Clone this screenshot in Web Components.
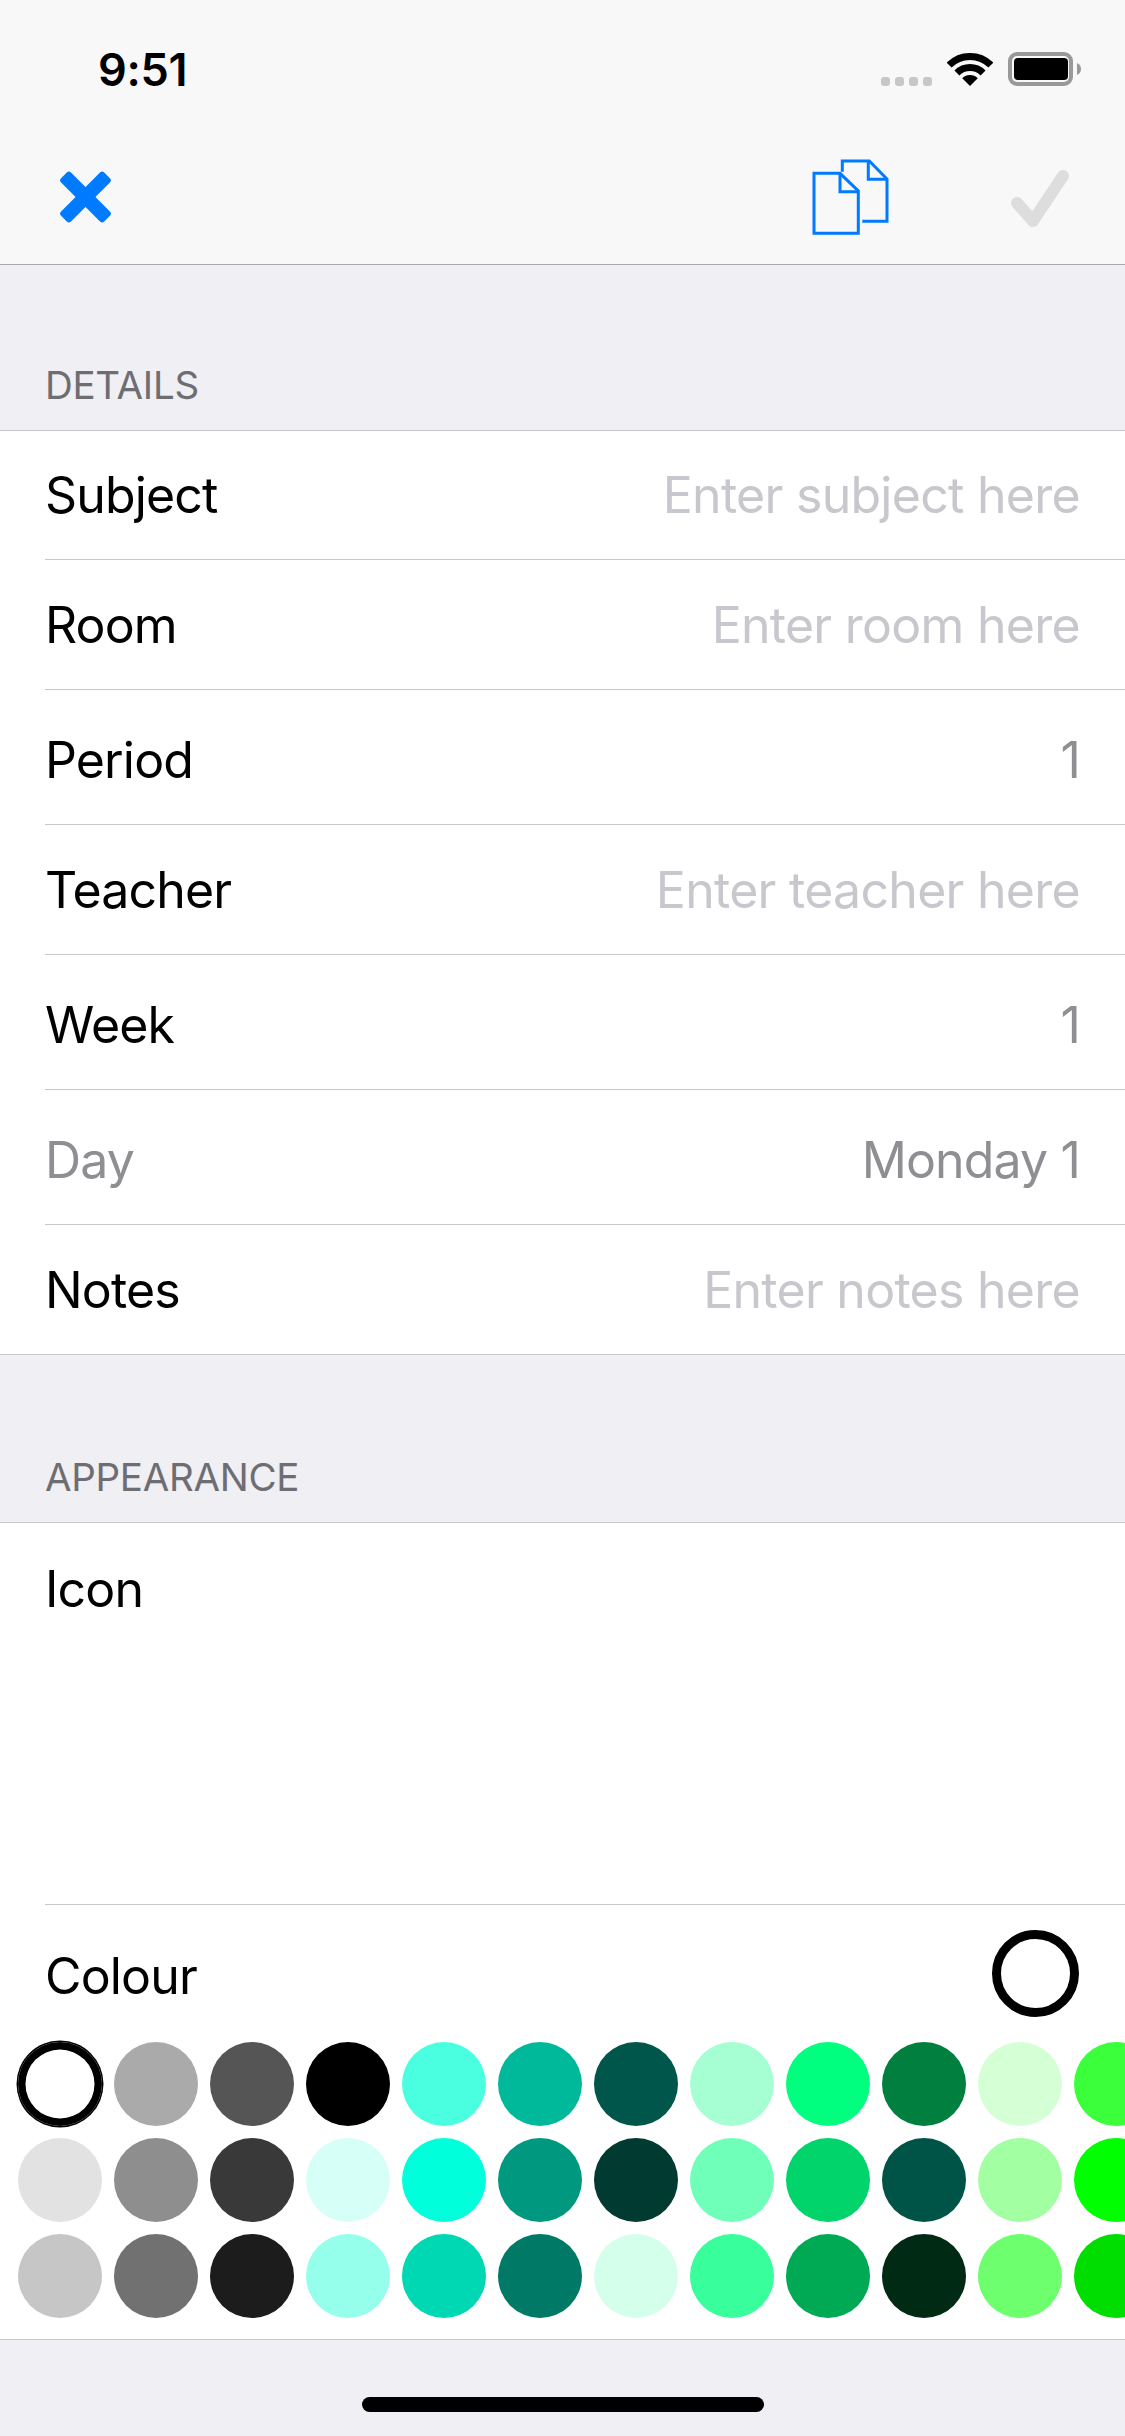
<!DOCTYPE html>
<html lang="en">
<head>
<meta charset="utf-8">
<title>Lesson</title>
<style>
  html, body { margin: 0; padding: 0; background: #efeff4; }
  body { width: 1125px; height: 2436px; overflow: hidden; font-family: Inter, "Liberation Sans", sans-serif; color: #000; }
  app-screen { --row-font: 50px; --row-track: -0.85px; }
</style>
</head>
<body>
<app-screen>
  <status-bar time="9:51"></status-bar>
  <nav-bar></nav-bar>
  <section-header top="165">DETAILS</section-header>
  <form-group>
    <form-row h="128" label="Subject" placeholder="Enter subject here"></form-row>
    <form-row h="129" label="Room" placeholder="Enter room here"></form-row>
    <form-row h="129" inset="5" label="Period" value="1"></form-row>
    <form-row h="129" label="Teacher" placeholder="Enter teacher here"></form-row>
    <form-row h="129" inset="5" label="Week" value="1"></form-row>
    <form-row h="129" inset="5" label="Day" value="Monday 1" muted></form-row>
    <form-row h="129" label="Notes" placeholder="Enter notes here" last></form-row>
  </form-group>
  <section-header top="167">APPEARANCE</section-header>
  <form-group>
    <icon-row></icon-row>
    <colour-row></colour-row>
  </form-group>
  <home-indicator></home-indicator>
</app-screen>
<script>
function def(name, css, html, init) {
  customElements.define(name, class extends HTMLElement {
    connectedCallback() {
      if (this.shadowRoot) return;
      const root = this.attachShadow({ mode: 'open' });
      root.innerHTML = '<style>' + css + '</style>' + (typeof html === 'function' ? html(this) : html);
      if (init) init(this, root);
    }
  });
}
const esc = s => String(s == null ? '' : s);

def('app-screen', ':host{display:flex;flex-direction:column;width:1125px;height:2436px;overflow:hidden;background:#efeff4}', '<slot></slot>');

def('status-bar', `
  :host{display:flex;align-items:flex-end;height:132px;box-sizing:border-box;padding:0 44px 46px 98px;background:#f8f8f8}
  .t{font-size:45px;font-weight:600;line-height:33px;letter-spacing:-.3px}
  .r{margin-left:auto;display:flex;align-items:flex-end}
  .dots{display:flex;gap:5px;margin-right:15px}
  .dots i{display:block;width:9px;height:9px;border-radius:3px;background:#c7c7c7}
  svg{display:block}
  .wifi{margin-right:15px}
`, el => `<div class="t">${esc(el.getAttribute('time'))}</div>
  <div class="r">
    <div class="dots"><i></i><i></i><i></i><i></i></div>
    <svg class="wifi" width="46" height="33" viewBox="0 0 46 33" fill="none" stroke="#000" stroke-width="7">
      <path d="M2.14 12.14A29.5 29.5 0 0 1 43.86 12.14"/>
      <path d="M9.92 19.92A18.5 18.5 0 0 1 36.08 19.92"/>
      <path d="M23 33L15.22 25.22A11 11 0 0 1 30.78 25.22Z" fill="#000" stroke="none"/>
    </svg>
    <svg width="73" height="34" viewBox="0 0 73 34">
      <rect x="2" y="2" width="61" height="30" rx="7" fill="none" stroke="#999" stroke-width="4"/>
      <rect x="6" y="6" width="54" height="22" rx="4" fill="#000"/>
      <path d="M69 11C71.5 12 73 14 73 17S71.5 22 69 23Z" fill="#999"/>
    </svg>
  </div>`);

def('nav-bar', `
  :host{display:flex;align-items:center;height:133px;box-sizing:border-box;padding:0 50px 2px 56px;background:#f8f8f8;border-bottom:1px solid #a9a9ab}
  svg{display:block;flex:none}
  .copy{margin-left:auto;margin-right:115px}
`, `<svg width="60" height="60" viewBox="0 0 60 60" fill="#007aff">
    <rect x="-1" y="23" width="61" height="14" rx="3" transform="rotate(45 29.5 30)"/>
    <rect x="-1" y="23" width="61" height="14" rx="3" transform="rotate(-45 29.5 30)"/>
  </svg>
  <svg class="copy" width="80" height="80" viewBox="0 0 80 80" fill="none" stroke="#007aff" stroke-width="3">
    <path d="M32.3 14.7V4H59.3L77 22V64.3H52.3"/>
    <path d="M58.3 4V22.3H77"/>
    <path d="M4 16.3H30L48.3 34V76.3H4Z"/>
    <path d="M30 16.3V34.7H48.3"/>
  </svg>
  <svg width="70" height="70" viewBox="0 0 70 70" fill="none" stroke="#ddd" stroke-width="12" stroke-linecap="round" stroke-linejoin="round">
    <path d="M12 41L28 59L58 14"/>
  </svg>`);

def('section-header', `
  :host{display:flex;align-items:flex-end;box-sizing:border-box;padding:0 0 31px 45px;background:#efeff4;color:#6d6d72;font-size:38.5px;line-height:28px;letter-spacing:-.3px;height:var(--h)}
`, '<slot></slot>', el => el.style.setProperty('--h', el.getAttribute('top') + 'px'));

def('form-group', `
  :host{display:block;background:#fff;border-top:1px solid #c8c7cc;border-bottom:1px solid #c8c7cc}
`, '<slot></slot>');

def('form-row', `
  :host{display:block;padding-left:45px;background:#fff}
  .in{display:flex;align-items:center;justify-content:space-between;box-sizing:content-box;height:var(--h);padding:var(--inset) 45px 0 0;border-bottom:1px solid #c8c7cc;font-size:var(--row-font);letter-spacing:var(--row-track);white-space:nowrap}
  :host([last]) .in{border-bottom:0}
  .v{color:#8e8e93}
  .p{color:#c7c7cd;letter-spacing:-.72px}
  :host([muted]) .l{color:#8e8e93}
`, el => {
  const ph = el.getAttribute('placeholder');
  const right = ph ? `<span class="p">${esc(ph)}</span>` : `<span class="v">${esc(el.getAttribute('value'))}</span>`;
  return `<div class="in"><span class="l">${esc(el.getAttribute('label'))}</span>${right}</div>`;
}, el => {
  el.style.setProperty('--h', el.getAttribute('h') + 'px');
  el.style.setProperty('--inset', (el.getAttribute('inset') || 0) + 'px');
});

def('icon-row', `
  :host{display:block;padding-left:45px;background:#fff}
  .in{height:381px;box-sizing:content-box;border-bottom:1px solid #c8c7cc;font-size:var(--row-font);letter-spacing:var(--row-track)}
  .l{display:flex;align-items:center;height:132px}
`, '<div class="in"><div class="l">Icon</div></div>');

def('colour-swatch', `
  :host{display:block;width:84px;height:84px;border-radius:50%;background:var(--c)}
  :host([selected]){background:#fff;box-shadow:0 0 0 1.5px #000,inset 0 0 0 7.5px #000}
`, '', el => el.style.setProperty('--c', el.getAttribute('c')));

def('colour-row', `
  :host{display:block;background:#fff;overflow:hidden}
  .top{display:flex;align-items:center;justify-content:space-between;height:137px;padding:0 46px 0 45px;font-size:var(--row-font);letter-spacing:var(--row-track)}
  .top span{padding-top:4px}
  .ring{width:87px;height:87px;box-sizing:border-box;border:9px solid #000;border-radius:50%;background:#fff}
  .grid{display:grid;grid-template-rows:repeat(3,84px);grid-auto-flow:column;grid-auto-columns:84px;gap:12px;padding:0 0 21px 18px;width:max-content}
`, `<div class="top"><span>Colour</span><div class="ring"></div></div><div class="grid"></div>`, (el, root) => {
  const cols = [
    ['#ffffff','#e2e2e2','#c6c6c6'],
    ['#aaaaaa','#8e8e8e','#717171'],
    ['#555555','#393939','#1c1c1c'],
    ['#000000','#d5fff7','#95ffec'],
    ['#4affdf','#00ffdb','#00d8b4'],
    ['#00b89a','#00997f','#007a66'],
    ['#00564a','#003a30','#d4ffeb'],
    ['#a5ffd3','#6fffb8','#38ff9c'],
    ['#00ff7f','#00d46a','#00aa55'],
    ['#007f3f','#005447','#002a14'],
    ['#d5ffd5','#a2ffa2','#6eff6e'],
    ['#3bff3b','#00ff00','#00dd00']
  ];
  const g = root.querySelector('.grid');
  cols.forEach((col, i) => col.forEach((c, j) => {
    const s = document.createElement('colour-swatch');
    s.setAttribute('c', c);
    if (i === 0 && j === 0) s.setAttribute('selected', '');
    g.appendChild(s);
  }));
});

def('home-indicator', `
  :host{display:flex;justify-content:center;padding-top:57px;background:#efeff4}
  i{display:block;width:402px;height:15px;border-radius:7.5px;background:#000}
`, '<i></i>');
</script>
</body>
</html>
